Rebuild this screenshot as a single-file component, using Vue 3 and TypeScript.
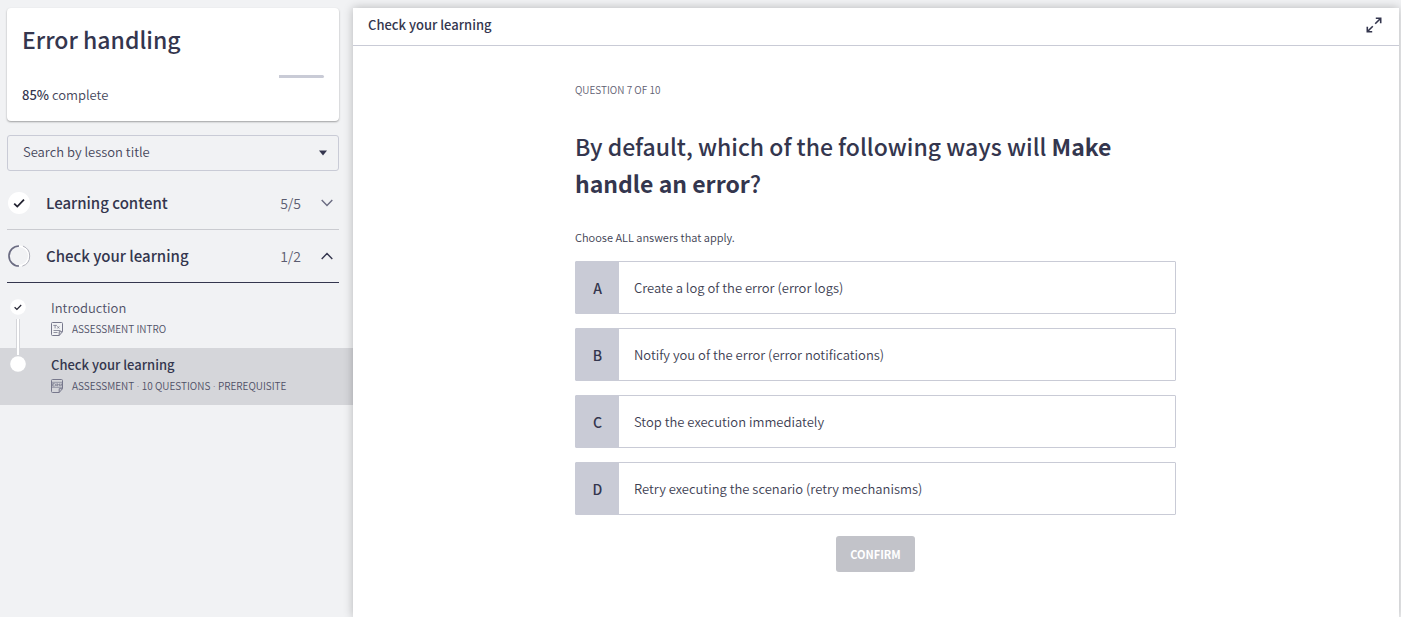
<script setup lang="ts">
import { ref } from 'vue'

interface Lesson {
  title: string
  meta: string[]
  kind: 'text' | 'exam'
  done: boolean
  active: boolean
}

interface Section {
  title: string
  count: string
  done: boolean
  open: boolean
}

const progress = 85
const search = ref('')
const picked = ref<string[]>([])

const sections: Section[] = [
  { title: 'Learning content', count: '5/5', done: true, open: false },
  { title: 'Check your learning', count: '1/2', done: false, open: true },
]

const lessons: Lesson[] = [
  { title: 'Introduction', meta: ['ASSESSMENT INTRO'], kind: 'text', done: true, active: false },
  { title: 'Check your learning', meta: ['ASSESSMENT', '10 QUESTIONS', 'PREREQUISITE'], kind: 'exam', done: false, active: true },
]

const answers = [
  { key: 'A', text: 'Create a log of the error (error logs)' },
  { key: 'B', text: 'Notify you of the error (error notifications)' },
  { key: 'C', text: 'Stop the execution immediately' },
  { key: 'D', text: 'Retry executing the scenario (retry mechanisms)' },
]
</script>

<template>
  <div class="page">
    <aside class="sidebar">
      <section class="card">
        <h1 class="course">Error handling</h1>
        <div class="track" role="progressbar" aria-label="Course progress" :aria-valuenow="progress">
          <div class="rest" :style="{ width: 100 - progress + '%' }"></div>
        </div>
        <p class="complete"><strong>{{ progress }}%</strong> complete</p>
      </section>

      <div class="search">
        <input v-model="search" class="search-input" type="text" placeholder="Search by lesson title" aria-label="Search by lesson title" />
        <button class="search-toggle" type="button" aria-label="Show lessons">
          <svg width="8" height="6" viewBox="0 0 8 6"><path d="M0 0.5h8L4 5.5z" fill="#34364e" /></svg>
        </button>
      </div>

      <nav class="outline">
        <button v-for="s in sections" :key="s.title" type="button" class="section" :class="{ open: s.open }" :aria-expanded="s.open">
          <svg v-if="s.done" class="badge" width="24" height="24" viewBox="0 0 24 24">
            <circle cx="12" cy="12" r="11" fill="#fff" />
            <path d="M7.2 12.6l3.1 3 6.7-6.9" fill="none" stroke="#222230" stroke-width="1.8" />
          </svg>
          <svg v-else class="badge" width="24" height="24" viewBox="0 0 24 24">
            <path d="M12 2.200a9.800 9.800 0 0 1 0 19.600" fill="none" stroke="#fff" stroke-width="1.6" />
            <path d="M12 1.300a10.700 10.700 0 0 1 0 21.400" fill="none" stroke="#a9aab4" stroke-width="0.9" stroke-dasharray="0 4 26 10" />
            <path d="M12 22a10 10 0 0 1 0-20" fill="none" stroke="#6b6c82" stroke-width="1.7" />
          </svg>
          <span class="section-title">{{ s.title }}</span>
          <span class="count">{{ s.count }}</span>
          <svg class="chevron" width="12" height="8" viewBox="0 0 12 8">
            <path :d="s.open ? 'M0.7 7l5.3-5.5L11.3 7' : 'M0.7 1l5.3 5.5L11.3 1'" fill="none" stroke="currentColor" stroke-width="1.4" />
          </svg>
        </button>
      </nav>

      <ul class="lessons">
        <li v-for="(l, i) in lessons" :key="l.title" class="lesson" :class="{ active: l.active }">
          <div class="rail">
            <svg width="16" height="16" viewBox="0 0 16 16">
              <circle cx="8" cy="8" r="7.8" fill="#fff" />
              <path v-if="l.done" d="M4.6 8.3l2.3 2.1 4.3-4.4" fill="none" stroke="#222230" stroke-width="1.2" />
            </svg>
            <span v-if="i < lessons.length - 1" class="line"></span>
          </div>
          <a class="lesson-link" href="#">
            <span class="lesson-title">{{ l.title }}</span>
            <span class="meta">
              <svg width="12" height="14" viewBox="0 0 12 14" fill="none" stroke="#77788c">
                <path d="M1.5 0.5h9q1 0 1 1v8.2l-3.300 3.800H1.500q-1 0-1-1v-11q0-1 1-1zM8.200 13.500v-3.800h3.300" />
                <path v-if="l.kind === 'text'" d="M2.300 3.400h3.600M4.100 3.400v3M6.300 4.300l2 2.200M8.300 4.300l-2 2.200M2.500 8.500h7M2.500 10.500h4" stroke-width="0.8" />
                <g v-else stroke-width="0.7">
                  <path d="M0.500 3.300h11M0.500 8.300h11M3.500 4.500H1.600v2.600h1.900M1.600 5.800h1.600M4 4.500l1.800 2.600M5.800 4.500L4 7.100" />
                  <path d="M6.500 7.200V4.700l1 1.500 1-1.500v2.500M9.400 7.200l.8-2.600.8 2.600" />
                </g>
              </svg>
              <span><template v-for="(m, j) in l.meta" :key="m"><span v-if="j > 0" class="dot">&nbsp;· </span>{{ m }}</template></span>
            </span>
          </a>
        </li>
      </ul>
    </aside>

    <main class="main">
      <header class="bar">
        <h2 class="bar-title">Check your learning</h2>
        <button class="expand" type="button" aria-label="Full screen">
          <svg width="16" height="16" viewBox="0 0 16 16" fill="none" stroke="#34364e" stroke-width="1.600">
            <path d="M9.200 6.800l5.300-5.300M9.800 1.300h4.900v4.900M6.800 9.200l-5.300 5.300M1.300 9.800v4.900h4.900" />
          </svg>
        </button>
      </header>

      <form class="question" @submit.prevent>
        <p class="step">QUESTION 7 OF 10</p>
        <h3 class="prompt">By default, which of the following ways will <strong>Make handle an error</strong>?</h3>
        <p class="hint">Choose ALL answers that apply.</p>
        <div class="answers">
          <label v-for="a in answers" :key="a.key" class="answer">
            <input v-model="picked" class="tick" type="checkbox" :value="a.key" />
            <span class="letter">{{ a.key }}</span>
            <span class="answer-text">{{ a.text }}</span>
          </label>
        </div>
        <button class="confirm" type="submit" :disabled="picked.length === 0">CONFIRM</button>
      </form>
    </main>
  </div>
</template>

<style>
body {
  background: #f1f2f4;
}
</style>

<style scoped>
.page {
  display: flex;
  min-height: 100vh;
  box-sizing: border-box;
  padding: 8px 2px 0 0;
  background: #f1f2f4;
  color: #34364e;
  font-family: "Noto Sans CJK SC", "Noto Sans", sans-serif;
  font-weight: 350;
  overflow: hidden;
}
h1, h2, h3, p, ul {
  margin: 0;
  padding: 0;
}
button, input {
  font: inherit;
  color: inherit;
}
button {
  border: 0;
  padding: 0;
  background: none;
  cursor: pointer;
}
svg {
  display: block;
  flex: none;
}
.sidebar {
  flex: none;
  width: 353px;
}
.card {
  margin: 0 14px 0 7px;
  padding: 13px 15px 14px;
  background: #fff;
  border-radius: 4px;
  box-shadow: 0 1px 2px rgba(0, 0, 0, 0.35);
}
.course {
  font-size: 23px;
  line-height: 36px;
  font-weight: 500;
}
.track {
  display: flex;
  justify-content: flex-end;
  margin: 18px 0 5px;
}
.rest {
  height: 3px;
  border-radius: 0 2px 2px 0;
  background: #c9cbd6;
}
.complete {
  font-size: 13px;
  line-height: 24px;
  color: #45465a;
}
.complete strong {
  font-weight: 500;
  color: #34364e;
}
.search {
  display: flex;
  align-items: center;
  box-sizing: border-box;
  height: 36px;
  margin: 14px 14px 6px 7px;
  border: 1px solid #c9cbd6;
  border-radius: 3px;
}
.search-input {
  flex: 1;
  min-width: 0;
  padding: 0 0 2px 15px;
  border: 0;
  outline: 0;
  background: none;
  font-size: 13px;
  line-height: 24px;
}
.search-input::placeholder {
  color: #45465a;
  opacity: 1;
}
.search-toggle {
  padding: 8px 11px;
}
.outline {
  display: flex;
  flex-direction: column;
  margin: 0 14px 0 7px;
}
.section {
  display: flex;
  align-items: center;
  height: 53px;
  border-bottom: 1px solid #cacbd0;
  text-align: left;
}
.section.open {
  border-color: #34364e;
}
.section-title {
  flex: 1;
  margin-left: 15px;
  font-size: 15px;
  line-height: 24px;
  font-weight: 500;
}
.count {
  margin-right: 20px;
  font-size: 14px;
  line-height: 24px;
  color: #5b5c70;
}
.chevron {
  margin-right: 6px;
  color: #6b6c82;
}
.open .chevron {
  color: #34364e;
}
.lessons {
  padding-top: 8px;
  list-style: none;
}
.lesson {
  display: flex;
  height: 57px;
}
.lesson.active {
  background: #d5d6da;
}
.rail {
  display: flex;
  flex-direction: column;
  align-items: center;
  width: 36px;
  padding-top: 8px;
}
.line {
  box-sizing: border-box;
  width: 4px;
  height: 36px;
  margin-top: 4px;
  border: 1px solid #d5d6da;
  border-width: 0 1px;
  background: #fff;
  flex: none;
}
.lesson-link {
  margin-left: 15px;
  padding-top: 5px;
  color: #4f5066;
  text-decoration: none;
}
.lesson-title {
  display: block;
  font-size: 13px;
  line-height: 24px;
}
.active .lesson-title {
  font-weight: 500;
  color: #34364e;
}
.meta {
  display: flex;
  align-items: center;
  gap: 9px;
  font-size: 10px;
  line-height: 18px;
}
.dot {
  font-family: "Open Sans", sans-serif;
}
.main {
  flex: 1;
  min-width: 0;
  background: #fff;
  box-shadow: 0 0 9px rgba(0, 0, 0, 0.25);
}
.bar {
  display: flex;
  align-items: center;
  justify-content: space-between;
  box-sizing: border-box;
  height: 38px;
  padding: 0 17px 3px 15px;
  border-bottom: 1px solid #c9cbd6;
}
.bar-title {
  font-size: 13px;
  line-height: 24px;
  font-weight: 500;
}
.question {
  display: flex;
  flex-direction: column;
  max-width: 601px;
  margin: 0 auto;
  padding: 35px 17px 40px 16px;
}
.step {
  font-size: 10px;
  line-height: 18px;
  color: #5f6072;
}
.prompt {
  margin-top: 29px;
  font-size: 23px;
  line-height: 37px;
  font-weight: 500;
}
.prompt strong {
  font-weight: 700;
}
.hint {
  margin-top: 25px;
  font-size: 11px;
  line-height: 20px;
  color: #3d3e52;
}
.answers {
  display: flex;
  flex-direction: column;
  gap: 14px;
  margin-top: 14px;
}
.answer {
  position: relative;
  display: flex;
  box-sizing: border-box;
  min-height: 53px;
  border: 1px solid #c9cbd6;
  border-radius: 1px;
  cursor: pointer;
}
.tick {
  position: absolute;
  opacity: 0;
}
.letter {
  display: flex;
  flex: none;
  align-items: center;
  justify-content: center;
  width: 43px;
  background: #c9cbd6;
  font-size: 14px;
  font-weight: 500;
}
.answer-text {
  align-self: center;
  padding: 0 15px;
  font-size: 13px;
  line-height: 24px;
  color: #3d3e52;
}
.confirm {
  align-self: center;
  height: 36px;
  margin-top: 21px;
  padding: 0 14px;
  border-radius: 3px;
  background: #c2c3c9;
  color: #fff;
  font-size: 11px;
  font-weight: 700;
}
</style>
